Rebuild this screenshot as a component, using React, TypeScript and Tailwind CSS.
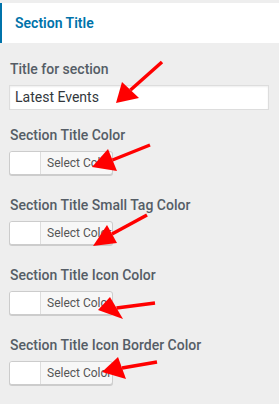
import React from 'react'

const colorFields = [
  'Section Title Color',
  'Section Title Small Tag Color',
  'Section Title Icon Color',
  'Section Title Icon Border Color',
]

// tail, tip, head corner a, head corner b
const arrows: [number, number, number, number, number, number, number, number][] = [
  [162, 62, 116, 103, 122, 82, 139, 98],
  [150, 145, 92, 167, 108, 149, 117, 171],
  [147, 215, 93, 246, 107, 225, 117, 243],
  [155, 303, 98, 310, 110, 297, 123, 319],
  [157, 362, 102, 372, 118, 357, 126, 379],
]

function ColorButton() {
  return (
    <div className="flex h-[24px] w-[104px] overflow-hidden rounded-[3px] border border-[#cccccc] bg-[#f7f7f7] shadow-[0_1px_0_#cccccc]">
      <div className="w-[31px] border-r border-[#dddddd] bg-white" />
      <div className="flex flex-1 items-center pl-[6px] text-[12px] text-[#555555]">Select Color</div>
    </div>
  )
}

export default function App() {
  return (
    <div
      className="relative h-[404px] w-[279px] overflow-hidden bg-[#eeeeee] pt-[3px]"
      style={{ fontFamily: 'Roboto, "Noto Sans", Arial, sans-serif' }}
    >
      <div className="flex h-[40px] items-center border-l-2 border-[#0073aa] bg-white pl-[13px] text-[14px] font-semibold text-[#0073aa]">
        Section Title
      </div>

      <div className="flex flex-col px-[9px] pt-[16px]">
        <div className="pl-[1px] text-[14px] font-medium leading-[20px] text-[#555d66]">Title for section</div>
        <div className="mt-[6px] flex h-[25px] w-[260px] items-center border border-[#dddddd] bg-white pl-[5px] text-[14px] text-[#32373c] shadow-[inset_0_1px_2px_rgba(0,0,0,0.07)]">
          Latest Events
        </div>

        {colorFields.map((label, i) => (
          <div key={label} className={`flex flex-col ${i === 0 ? 'mt-[15px]' : 'mt-[20px]'}`}>
            <div className="pl-[1px] text-[14px] font-medium leading-[20px] text-[#555d66]">{label}</div>
            <div className="mt-[6px]">
              <ColorButton />
            </div>
          </div>
        ))}
      </div>

      <svg className="pointer-events-none absolute left-0 top-0" width="279" height="404">
        {arrows.map(([tx, ty, px, py, ax, ay, bx, by], i) => (
          <g key={i} fill="#ff0000" stroke="#ff0000">
            <line x1={tx} y1={ty} x2={(ax + bx) / 2} y2={(ay + by) / 2} strokeWidth="3.5" />
            <polygon points={`${px},${py} ${ax},${ay} ${bx},${by}`} strokeWidth="0" />
          </g>
        ))}
      </svg>
    </div>
  )
}
